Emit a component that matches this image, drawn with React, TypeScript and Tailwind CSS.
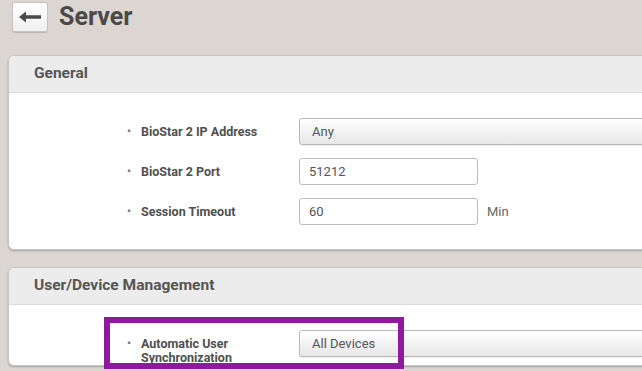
import React from 'react'

const font = { fontFamily: 'Roboto, "Liberation Sans", sans-serif' }

function Label({ children }: { children: React.ReactNode }) {
  return (
    <div className="flex w-[290px] shrink-0 items-start pl-[118px] text-[12.5px] font-bold leading-[14px] text-[#4f4f4f]">
      <span className="w-[14px] shrink-0 text-[11px] text-[#777]">•</span>
      <span>{children}</span>
    </div>
  )
}

function SelectBox({ value }: { value: string }) {
  return (
    <div className="flex h-[27px] w-[420px] shrink-0 items-center rounded-[3px] border border-[#b9b9b9] bg-gradient-to-b from-white to-[#e7e7e7] pl-[12px] text-[13px] text-[#555] shadow-[0_1px_1px_rgba(0,0,0,0.08)]">
      {value}
    </div>
  )
}

function TextBox({ value }: { value: string }) {
  return (
    <div className="flex h-[27px] w-[179px] shrink-0 items-center rounded-[3px] border border-[#bdbdbd] bg-white pl-[9px] text-[13px] text-[#555]">
      {value}
    </div>
  )
}

function Card({ title, children }: { title: string; children: React.ReactNode }) {
  return (
    <div className="ml-[8px] w-[720px] rounded-[6px] border border-[#c9c6c3] bg-white shadow-[0_1px_2px_rgba(0,0,0,0.25)]">
      <div className="flex h-[37px] items-center rounded-t-[6px] border-b border-[#dadada] bg-[#ececec] pl-[25px] text-[15.5px] font-bold text-[#555]">
        {title}
      </div>
      {children}
    </div>
  )
}

export default function App() {
  return (
    <div className="relative h-[371px] w-[642px] overflow-hidden bg-[#dbd6d2]" style={font}>
      <div className="flex items-center pl-[12px] pt-[2px]">
        <div className="flex h-[30px] w-[36px] items-center justify-center rounded-[3px] border border-[#c4c4c4] bg-gradient-to-b from-white to-[#f0f0f0] shadow-[0_1px_1px_rgba(0,0,0,0.15)]">
          <svg width="22" height="12" viewBox="0 0 22 12">
            <path d="M0 6 L7 0.5 L7 4.3 L22 4.3 L22 7.7 L7 7.7 L7 11.5 Z" fill="#4a4a4a" />
          </svg>
        </div>
        <div className="ml-[11px] text-[25px] font-bold leading-[30px] text-[#4a4a4a]">Server</div>
      </div>

      <div className="mt-[23px]">
        <Card title="General">
          <div className="flex flex-col gap-[13px] pb-[24px] pt-[25px]">
            <div className="flex items-center">
              <Label>BioStar 2 IP Address</Label>
              <SelectBox value="Any" />
            </div>
            <div className="flex items-center">
              <Label>BioStar 2 Port</Label>
              <TextBox value="51212" />
            </div>
            <div className="flex items-center">
              <Label>Session Timeout</Label>
              <TextBox value="60" />
              <span className="ml-[9px] text-[13px] text-[#666]">Min</span>
            </div>
          </div>
        </Card>
      </div>

      <div className="mt-[17px]">
        <Card title="User/Device Management">
          <div className="flex items-start pt-[25px]">
            <div className="pt-[7px]">
              <Label>
                Automatic User
                <br />
                Synchronization
              </Label>
            </div>
            <SelectBox value="All Devices" />
          </div>
        </Card>
      </div>

      <div className="absolute left-[104px] top-[317px] h-[52px] w-[300px] border-[6px] border-[#8f1a9f]" />
    </div>
  )
}
